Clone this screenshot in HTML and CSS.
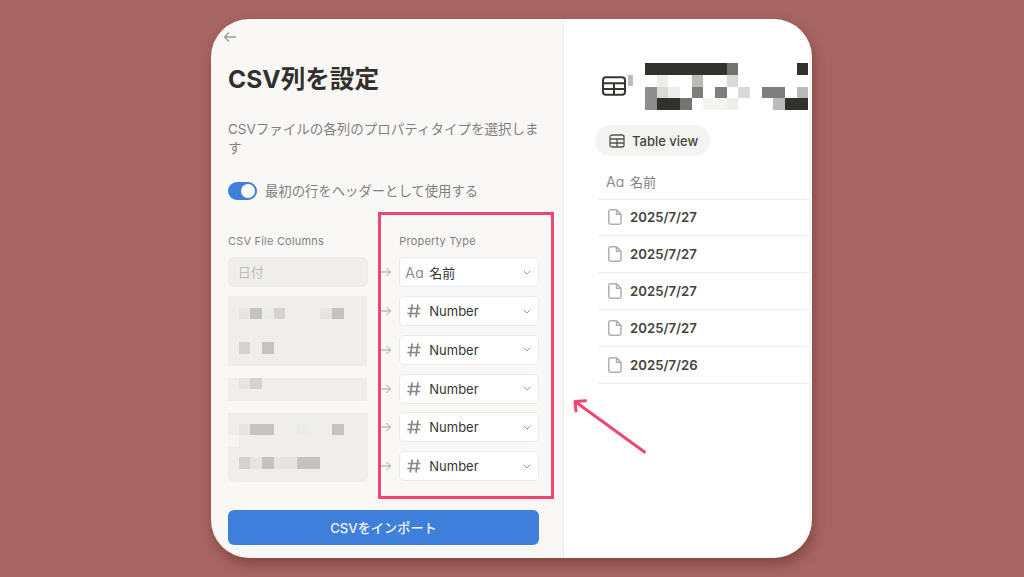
FILE: index.html
```html
<!DOCTYPE html>
<html lang="ja">
<head>
<meta charset="utf-8">
<title>CSV列を設定</title>
<link rel="stylesheet" href="styles.css">
</head>
<body>
<main class="card">
  <section class="left">
    <svg class="back" viewBox="0 0 14 12" width="14" height="12"><path d="M13 6H1.500M6 1.500 1.500 6 6 10.500" fill="none" stroke="#9b9a97" stroke-width="1.300"/></svg>
    <h1 class="title">CSV列を設定</h1>
    <p class="desc">CSVファイルの各列のプロパティタイプを選択します</p>
    <div class="toggle-row"><span class="toggle"><span class="knob"></span></span><span class="toggle-label">最初の行をヘッダーとして使用する</span></div>
    <div class="columns">
      <div class="col-csv">
        <div class="col-head">CSV File Columns</div>
        <div class="cell cell-date">日付</div>
        <div class="cell blur b2">
          <div class="mos"><i class="f s1"></i><i class="d s1"></i><i class="v s1"></i><i class="m s1"></i><i class="e s3"></i><i class="f s1"></i><i class="d s1"></i></div>
          <div class="mos gap2"><i class="m s1"></i><i class="e s1"></i><i class="d s1"></i></div>
        </div>
        <div class="cell blur b3">
          <div class="mos"><i class="f s1"></i><i class="m s1"></i></div>
        </div>
        <div class="cell blur b4">
          <div class="mos"><i class="f s1"></i><i class="d s2"></i><i class="e s2"></i><i class="v s1"></i><i class="e s2"></i><i class="d s1"></i></div>
          <div class="mos patch-row"><i class="patch s1"></i></div>
          <div class="mos gap3"><i class="m s1"></i><i class="f s1"></i><i class="d s1"></i><i class="f s2"></i><i class="d s2"></i></div>
        </div>
      </div>
      <div class="col-type">
        <div class="col-head type-head">Property Type</div>
        <div class="type-row">
          <svg class="link" viewBox="0 0 10 10" width="10" height="10"><path d="M0 5h9.300M5.500 1l4 4-4 4" fill="none" stroke="#a09f9c" stroke-width="1"/></svg>
          <div class="select"><span class="aa">Aɑ</span><span class="sel-text">名前</span><svg class="chev" viewBox="0 0 8 5" width="8" height="5"><path d="M.7.7 4 4l3.300-3.300" fill="none" stroke="#9b9a97" stroke-width="1"/></svg></div>
        </div>
        <div class="type-row">
          <svg class="link" viewBox="0 0 10 10" width="10" height="10"><path d="M0 5h9.300M5.500 1l4 4-4 4" fill="none" stroke="#a09f9c" stroke-width="1"/></svg>
          <div class="select"><svg class="hash" viewBox="0 0 14 14" width="14" height="14"><path d="M5.200.5 3.200 13.500M11 .5 9 13.500M.8 4.500h12.700M.3 9.500h12.700" fill="none" stroke="#8a8986" stroke-width="1.700"/></svg><span class="sel-text">Number</span><svg class="chev" viewBox="0 0 8 5" width="8" height="5"><path d="M.7.7 4 4l3.300-3.300" fill="none" stroke="#9b9a97" stroke-width="1"/></svg></div>
        </div>
        <div class="type-row">
          <svg class="link" viewBox="0 0 10 10" width="10" height="10"><path d="M0 5h9.300M5.500 1l4 4-4 4" fill="none" stroke="#a09f9c" stroke-width="1"/></svg>
          <div class="select"><svg class="hash" viewBox="0 0 14 14" width="14" height="14"><path d="M5.200.5 3.200 13.500M11 .5 9 13.500M.8 4.500h12.700M.3 9.500h12.700" fill="none" stroke="#8a8986" stroke-width="1.700"/></svg><span class="sel-text">Number</span><svg class="chev" viewBox="0 0 8 5" width="8" height="5"><path d="M.7.7 4 4l3.300-3.300" fill="none" stroke="#9b9a97" stroke-width="1"/></svg></div>
        </div>
        <div class="type-row">
          <svg class="link" viewBox="0 0 10 10" width="10" height="10"><path d="M0 5h9.300M5.500 1l4 4-4 4" fill="none" stroke="#a09f9c" stroke-width="1"/></svg>
          <div class="select"><svg class="hash" viewBox="0 0 14 14" width="14" height="14"><path d="M5.200.5 3.200 13.500M11 .5 9 13.500M.8 4.500h12.700M.3 9.500h12.700" fill="none" stroke="#8a8986" stroke-width="1.700"/></svg><span class="sel-text">Number</span><svg class="chev" viewBox="0 0 8 5" width="8" height="5"><path d="M.7.7 4 4l3.300-3.300" fill="none" stroke="#9b9a97" stroke-width="1"/></svg></div>
        </div>
        <div class="type-row">
          <svg class="link" viewBox="0 0 10 10" width="10" height="10"><path d="M0 5h9.300M5.500 1l4 4-4 4" fill="none" stroke="#a09f9c" stroke-width="1"/></svg>
          <div class="select"><svg class="hash" viewBox="0 0 14 14" width="14" height="14"><path d="M5.200.5 3.200 13.500M11 .5 9 13.500M.8 4.500h12.700M.3 9.500h12.700" fill="none" stroke="#8a8986" stroke-width="1.700"/></svg><span class="sel-text">Number</span><svg class="chev" viewBox="0 0 8 5" width="8" height="5"><path d="M.7.7 4 4l3.300-3.300" fill="none" stroke="#9b9a97" stroke-width="1"/></svg></div>
        </div>
        <div class="type-row">
          <svg class="link" viewBox="0 0 10 10" width="10" height="10"><path d="M0 5h9.300M5.500 1l4 4-4 4" fill="none" stroke="#a09f9c" stroke-width="1"/></svg>
          <div class="select"><svg class="hash" viewBox="0 0 14 14" width="14" height="14"><path d="M5.200.5 3.200 13.500M11 .5 9 13.500M.8 4.500h12.700M.3 9.500h12.700" fill="none" stroke="#8a8986" stroke-width="1.700"/></svg><span class="sel-text">Number</span><svg class="chev" viewBox="0 0 8 5" width="8" height="5"><path d="M.7.7 4 4l3.300-3.300" fill="none" stroke="#9b9a97" stroke-width="1"/></svg></div>
        </div>
      </div>
    </div>
    <button class="import">CSVをインポート</button>
  </section>

  <section class="right">
    <div class="db-head">
      <svg class="db-icon" viewBox="0 0 24 20" width="24" height="20"><rect x="1" y="1.200" width="22" height="17.600" rx="3" fill="none" stroke="#37352f" stroke-width="2"/><path d="M1 7.200h22M1 13h22M12 7.200v11.600" stroke="#37352f" stroke-width="2" fill="none"/></svg>
      <span class="sliver"></span>
      <div class="pix">
        <i class="k c7"></i><i class="g7 c1"></i><i class="e c5"></i><i class="k c1"></i>
        <i class="e c1"></i><i class="g1 c1"></i><i class="e c2"></i><i class="g3 c1"></i><i class="e c2"></i><i class="g4 c1"></i><i class="e c6"></i>
        <i class="g5 c1"></i><i class="g4 c1"></i><i class="g1 c1"></i><i class="e c1"></i><i class="g6 c1"></i><i class="e c1"></i><i class="g6 c1"></i><i class="e c1"></i><i class="g4 c1"></i><i class="e c1"></i><i class="g6 c2"></i><i class="e c1"></i><i class="g3 c1"></i>
        <i class="g5 c1"></i><i class="k c2"></i><i class="g7 c1"></i><i class="e c1"></i><i class="g0 c2"></i><i class="g1 c1"></i><i class="e c3"></i><i class="g3 c1"></i><i class="k c2"></i>
      </div>
    </div>
    <div class="pill">
      <svg viewBox="0 0 16 14" width="16" height="14"><rect x="1" y="1" width="14" height="12" rx="2" fill="none" stroke="#55534e" stroke-width="1.300"/><path d="M1 5h14M1 9h14M8 5v8" stroke="#55534e" stroke-width="1.300" fill="none"/></svg>
      <span>Table view</span>
    </div>
    <div class="th"><span class="aa aa-th">Aɑ</span><span>名前</span></div>
    <div class="tr"><svg class="doc" viewBox="0 0 14 16" width="14" height="16"><path d="M2.500.8h6L13 5.300v8.200a1.700 1.700 0 0 1-1.700 1.700H2.500A1.700 1.700 0 0 1 .8 13.500V2.500A1.700 1.700 0 0 1 2.500.8ZM8.500.8v4.500H13" fill="none" stroke="#b0afac" stroke-width="1.500"/></svg><span>2025/7/27</span></div>
    <div class="tr"><svg class="doc" viewBox="0 0 14 16" width="14" height="16"><path d="M2.500.8h6L13 5.300v8.200a1.700 1.700 0 0 1-1.700 1.700H2.500A1.700 1.700 0 0 1 .8 13.500V2.500A1.700 1.700 0 0 1 2.500.8ZM8.500.8v4.500H13" fill="none" stroke="#b0afac" stroke-width="1.500"/></svg><span>2025/7/27</span></div>
    <div class="tr"><svg class="doc" viewBox="0 0 14 16" width="14" height="16"><path d="M2.500.8h6L13 5.300v8.200a1.700 1.700 0 0 1-1.700 1.700H2.500A1.700 1.700 0 0 1 .8 13.500V2.500A1.700 1.700 0 0 1 2.500.8ZM8.500.8v4.500H13" fill="none" stroke="#b0afac" stroke-width="1.500"/></svg><span>2025/7/27</span></div>
    <div class="tr"><svg class="doc" viewBox="0 0 14 16" width="14" height="16"><path d="M2.500.8h6L13 5.300v8.200a1.700 1.700 0 0 1-1.700 1.700H2.500A1.700 1.700 0 0 1 .8 13.500V2.500A1.700 1.700 0 0 1 2.500.8ZM8.500.8v4.500H13" fill="none" stroke="#b0afac" stroke-width="1.500"/></svg><span>2025/7/27</span></div>
    <div class="tr"><svg class="doc" viewBox="0 0 14 16" width="14" height="16"><path d="M2.500.8h6L13 5.300v8.200a1.700 1.700 0 0 1-1.700 1.700H2.500A1.700 1.700 0 0 1 .8 13.500V2.500A1.700 1.700 0 0 1 2.500.8ZM8.500.8v4.500H13" fill="none" stroke="#b0afac" stroke-width="1.500"/></svg><span>2025/7/26</span></div>
  </section>

  <div class="mark-box"></div>
  <svg class="mark-arrow" viewBox="0 0 74 54" width="74" height="54"><path d="M71.500 52 2 1.500M2 1.500l10.500-.7M2 1.500 3 11" fill="none" stroke="#ef4672" stroke-width="3" stroke-linecap="round"/></svg>
</main>
</body>
</html>
```

FILE: styles.css
```css
* { box-sizing: border-box; }
html, body { margin: 0; height: 100%; }
body {
  background: #a66462;
  padding: 19px 0 0 211px;
  overflow: hidden;
  font-family: Inter, "Noto Sans CJK JP", sans-serif;
  color: #37352f;
}
.card {
  position: relative;
  display: flex;
  width: 601px;
  height: 539px;
  background: #f9f8f7;
  border-radius: 38px;
  overflow: hidden;
}
body::before {
  content: "";
  position: absolute;
  left: 211px;
  top: 19px;
  width: 601px;
  height: 539px;
  border-radius: 38px;
  box-shadow: 2px 6px 12px rgba(70, 20, 20, .36);
}
.left {
  width: 353px;
  padding: 12px 24px 0 16.7px;
  border-right: 1px solid #eeedeb;
  display: flex;
  flex-direction: column;
  align-items: flex-start;
}
.back { margin-left: -4.700px; flex: none; }
.title {
  margin: 19px 0 0 .3px;
  font-size: 24.6px;
  line-height: 34px;
  font-weight: 700;
  color: #32302c;
}
.desc {
  margin: 24px 0 0 .3px;
  width: 312px;
  font-size: 13.5px;
  line-height: 19px;
  color: #82807c;
}
.toggle-row {
  margin: 24px 0 0 .3px;
  display: flex;
  align-items: center;
  gap: 8px;
  height: 18px;
}
.toggle {
  width: 29px;
  height: 18px;
  border-radius: 9px;
  background: #3f7fdc;
  display: flex;
  justify-content: flex-end;
  align-items: center;
  padding-right: 2px;
}
.knob { width: 14px; height: 14px; border-radius: 50%; background: #fff; }
.toggle-label { font-size: 13.35px; line-height: 18px; color: #82807c; }
.columns { margin-top: 34px; display: flex; width: 312px; height: 248px; }
.col-csv { width: 139px; display: flex; flex-direction: column; flex: none; }
.col-type { width: 173px; display: flex; flex-direction: column; gap: 8.8px; flex: none; }
.col-head { font-size: 11px; line-height: 14px; letter-spacing: .2px; color: #82807c; margin: 0 0 9.300px .3px; }
.type-head { margin: 0 0 .5px 32.6px; }
.cell { width: 139px; background: #efeeec; }
.cell-date {
  width: 140px;
  height: 30px;
  border-radius: 6px;
  border: 1px solid #ecebe9;
  padding-left: 9px;
  font-size: 13px;
  line-height: 28px;
  color: #bdbcb9;
}
.blur { padding: 12px 0 0 11px; }
.b2 { margin-top: 8.700px; height: 70px; }
.b3 { margin-top: 12px; height: 23px; padding-top: 0; }
.b4 { margin-top: 12px; width: 140px; height: 69px; padding-top: 11px; border-radius: 0 0 6px 6px; }
.mos { display: flex; height: 11.5px; }
.mos i { display: block; height: 100%; flex: none; }
.gap2 { margin-top: 23px; }
.patch-row { margin: 0 0 0 -11px; }
.gap3 { margin-top: 10.500px; }
.s1 { width: 11.67px; }
.s2 { width: 23.34px; }
.s3 { width: 35.01px; }
.f { background: #e6e5e3; }
.m { background: #d4d3d0; }
.d { background: #c4c3bf; }
.e { background: transparent; }
.v { background: #eaeae8; }
.patch { background: #f6f5f4; }
.type-row { display: flex; align-items: center; height: 30px; }
.link { flex: none; margin: 0 8.600px 0 14px; }
.select {
  width: 140px;
  height: 30px;
  flex: none;
  display: flex;
  align-items: center;
  background: #fff;
  border: 1px solid #ecebe9;
  border-radius: 5px;
  position: relative;
}
.aa { font-family: "Inter", sans-serif; font-size: 14px; font-weight: 400; color: #8e8d8a; letter-spacing: .2px; }
.select .aa { margin-left: 5px; width: 24px; flex: none; }
.hash { margin-left: 7px; margin-right: 8px; flex: none; }
.sel-text { font-size: 13px; color: #37352f; }
.chev { position: absolute; right: 7px; top: 11.500px; }
.import {
  margin-top: 28px;
  width: 311.600px;
  height: 35px;
  border: 0;
  border-radius: 6px;
  background: #3f7fdc;
  color: #f3f6fb;
  padding: 0;
  font: 500 13.2px Inter, "Noto Sans CJK JP", sans-serif;
}
.right { width: 245px; background: #fff; padding-top: 44px; flex: none; padding-left: 34px; border-radius: 0 38px 38px 0; }
.db-head { display: flex; align-items: center; }
.db-icon { margin: 0 0 2px 4px; flex: none; }
.sliver { width: 5px; height: 11px; margin: 12px 0 0 2px; background: #bdbcba; flex: none; align-self: flex-start; }
.pix {
  margin-left: 12px;
  width: 164px;
  display: grid;
  grid-template-columns: repeat(14, 11.67px);
  grid-auto-rows: 11.75px;
  flex: none;
}
.pix i { display: block; }
.c1 { grid-column: span 1; }
.c2 { grid-column: span 2; }
.c3 { grid-column: span 3; }
.c5 { grid-column: span 5; }
.c6 { grid-column: span 6; }
.c7 { grid-column: span 7; }
.k { background: #33312d; }
.g0 { background: #f4f4f3; }
.g1 { background: #ededec; }
.g3 { background: #bcbbb9; }
.g4 { background: #d9d9d8; }
.g5 { background: #8f8e8c; }
.g6 { background: #7f7e7c; }
.g7 { background: #747370; }
.pill {
  margin: 15px 0 0 -3px;
  width: 115px;
  height: 31px;
  border-radius: 16px;
  background: #f4f4f3;
  display: flex;
  align-items: center;
  gap: 7px;
  padding-left: 14px;
  font-size: 13px;
  font-weight: 500;
  color: #45433e;
}
.th, .tr { display: flex; align-items: center; border-bottom: 1px solid #eeeeed; }
.th { height: 43.5px; gap: 8px; padding: 9px 0 0 8px; font-size: 13px; color: #82807c; }
.aa-th { width: 16px; }
.tr { height: 36.9px; padding-left: 10px; gap: 8px; font-size: 13.2px; font-weight: 600; color: #45433e; }
.doc { flex: none; }
.mark-box {
  position: absolute;
  left: 167px;
  top: 193px;
  width: 176px;
  height: 287px;
  border: 3px solid #ef4672;
}
.mark-arrow { position: absolute; left: 362px; top: 380.500px; overflow: visible; }
```
